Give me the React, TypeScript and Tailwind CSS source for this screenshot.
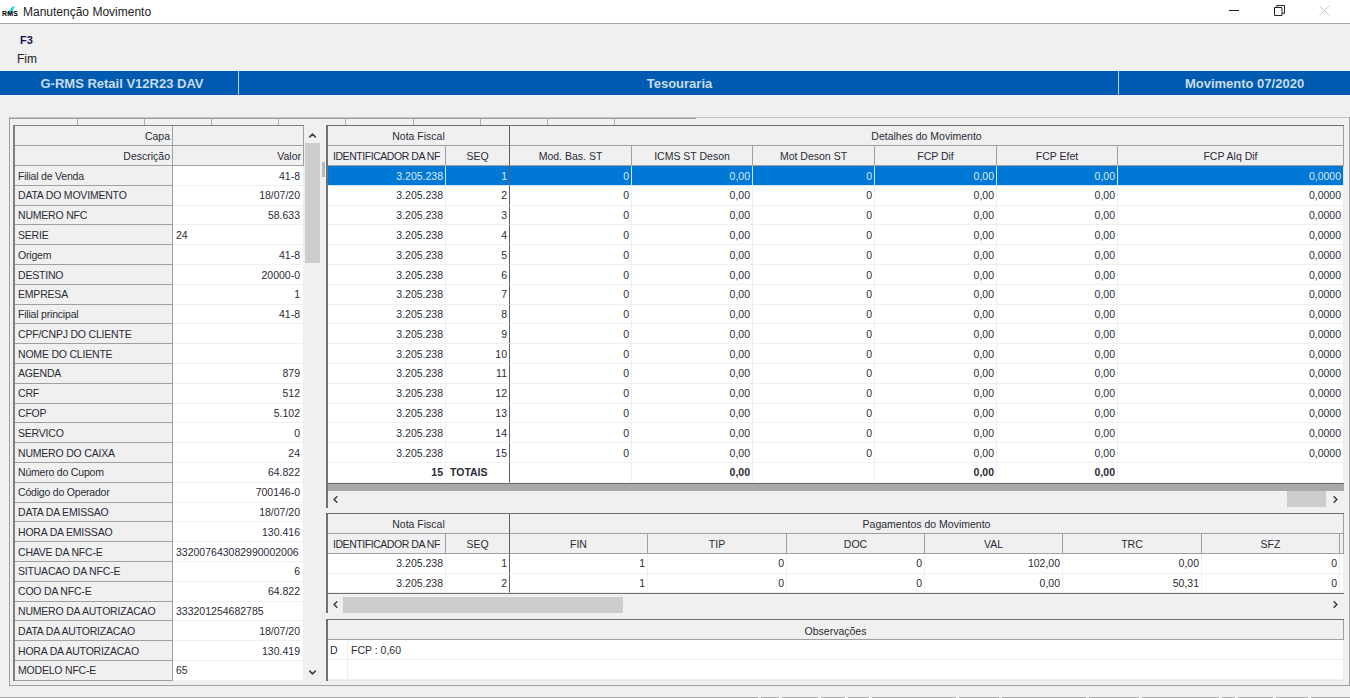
import { ChevronDown, ChevronLeft, ChevronRight, ChevronUp } from "lucide-react";
import type { ReactNode } from "react";

const capa: [string, string, boolean?][] = [
  ["Filial de Venda", "41-8"],
  ["DATA DO MOVIMENTO", "18/07/20"],
  ["NUMERO NFC", "58.633"],
  ["SERIE", "24", true],
  ["Origem", "41-8"],
  ["DESTINO", "20000-0"],
  ["EMPRESA", "1"],
  ["Filial principal", "41-8"],
  ["CPF/CNPJ DO CLIENTE", ""],
  ["NOME DO CLIENTE", ""],
  ["AGENDA", "879"],
  ["CRF", "512"],
  ["CFOP", "5.102"],
  ["SERVICO", "0"],
  ["NUMERO DO CAIXA", "24"],
  ["Número do Cupom", "64.822"],
  ["Código do Operador", "700146-0"],
  ["DATA DA EMISSAO", "18/07/20"],
  ["HORA DA EMISSAO", "130.416"],
  ["CHAVE DA NFC-E", "332007643082990002006", true],
  ["SITUACAO DA NFC-E", "6"],
  ["COO DA NFC-E", "64.822"],
  ["NUMERO DA AUTORIZACAO", "333201254682785", true],
  ["DATA DA AUTORIZACAO", "18/07/20"],
  ["HORA DA AUTORIZACAO", "130.419"],
  ["MODELO NFC-E", "65", true],
];

const detalhes = ["Mod. Bas. ST", "ICMS ST Deson", "Mot Deson ST", "FCP Dif", "FCP Efet", "FCP Alq Dif"];
const pagamentos = ["FIN", "TIP", "DOC", "VAL", "TRC", "SFZ"];
const pagRows = [
  ["1", "0", "0", "102,00", "0,00", "0"],
  ["1", "0", "0", "0,00", "50,31", "0"],
];
const tabTicks = [0, 1, 2, 3, 4, 5, 6, 7, 8];
const footerSegments = [
  "w-[758px]", "w-[18px]", "w-[36px]", "w-[24px]", "w-[21px]", "w-[84px]", "w-[40px]",
  "w-[84px]", "w-[50px]", "w-[77px]", "w-[13px]", "w-[35px]", "w-[32px]", "w-[39px]",
];

const detalhesCols = "grid-cols-[118px_64px_122px_121px_122px_122px_121px_226px]";
const pagCols = "grid-cols-[118px_64px_138px_139px_138px_138px_139px_138px_4px]";

function Head({
  children,
  className = "",
  pad = "pt-[2px]",
}: {
  children?: ReactNode;
  className?: string;
  pad?: string;
}) {
  return (
    <div className={`flex items-center justify-center overflow-hidden whitespace-nowrap border-b border-r border-[#a0a0a0] bg-[#f0f0f0] text-[#2b2b35] ${pad} ${className}`}>
      {children}
    </div>
  );
}

function Cell({ children, className = "", selected = false }: { children?: ReactNode; className?: string; selected?: boolean }) {
  return (
    <div
      className={`flex items-center justify-end overflow-hidden whitespace-nowrap border-b border-r pr-[2px] pt-[2px] ${
        selected ? "border-[#d4e6f7] bg-[#0078d7] text-[#dcebf8]" : "border-[#f0f0f0] bg-white text-[#2b2b35]"
      } ${className}`}
    >
      {children}
    </div>
  );
}

function HScroll({ thumb }: { thumb: "left" | "right" }) {
  return (
    <div className="flex h-[17px] items-center bg-[#f0f0f0]">
      <div className="flex w-[15px] justify-center text-[#404040]">
        <ChevronLeft size={11} strokeWidth={3.5} />
      </div>
      <div className="flex h-[16px] flex-1">
        {thumb === "left" ? (
          <div className="w-[280px] bg-[#cdcdcd]" />
        ) : (
          <div className="ml-auto mr-[1px] w-[39px] bg-[#cdcdcd]" />
        )}
      </div>
      <div className="flex w-[17px] justify-center text-[#404040]">
        <ChevronRight size={11} strokeWidth={3.5} />
      </div>
    </div>
  );
}

function CapaPanel() {
  return (
    <div className="flex">
      <div className="h-[556px] w-[291px] border-l-2 border-t border-[#808080]">
        <div className="grid grid-cols-[158px_131px] auto-rows-[20px]">
          <Head className="justify-end pr-[2px]">Capa</Head>
          <Head />
          <Head className="justify-end pr-[2px]">Descrição</Head>
          <Head className="justify-end pr-[2px]">Valor</Head>
        </div>
        <div className="grid grid-cols-[158px_131px] auto-rows-[19.8px]">
          {capa.map(([label, value, left], i) => (
            <div key={i} className="contents">
              <Head className="justify-start pl-[3px] tracking-[-0.2px]">{label}</Head>
              <Cell className={left ? "justify-start pl-[3px] pr-0" : "pr-[3px]"}>{value}</Cell>
            </div>
          ))}
        </div>
      </div>
      <div className="flex h-[556px] w-[16px] flex-col items-center bg-[#f0f0f0] text-[#404040]">
        <div className="flex h-[18px] items-center pt-[3px]">
          <ChevronUp size={11} strokeWidth={3.5} />
        </div>
        <div className="h-[120px] w-[15px] bg-[#cdcdcd]" />
        <div className="mt-auto flex h-[18px] items-center">
          <ChevronDown size={11} strokeWidth={3.5} />
        </div>
      </div>
      <div className="flex w-[6px] flex-col pl-[2px]">
        <div className="mt-[37px] h-[15px] w-[3px] bg-[#b9b9b9]" />
      </div>
    </div>
  );
}

function DetalhesGrid() {
  return (
    <div className="border-l-2 border-t border-[#707070]">
      <div className={`grid auto-rows-[20px] ${detalhesCols}`}>
        <Head className="col-span-2 border-r-[#606060]">Nota Fiscal</Head>
        <Head className="col-span-6">Detalhes do Movimento</Head>
        <Head className="tracking-[-0.45px]">IDENTIFICADOR DA NF</Head>
        <Head className="border-r-[#606060]">SEQ</Head>
        {detalhes.map((h) => (
          <Head key={h}>{h}</Head>
        ))}
      </div>
      <div className={`grid auto-rows-[19.8px] ${detalhesCols}`}>
        {Array.from({ length: 15 }, (_, i) => (
          <div key={i} className="contents">
            <Cell selected={i === 0}>3.205.238</Cell>
            <Cell selected={i === 0} className="border-r-[#606060]">{i + 1}</Cell>
            <Cell selected={i === 0}>0</Cell>
            <Cell selected={i === 0}>0,00</Cell>
            <Cell selected={i === 0}>0</Cell>
            <Cell selected={i === 0}>0,00</Cell>
            <Cell selected={i === 0}>0,00</Cell>
            <Cell selected={i === 0}>0,0000</Cell>
          </div>
        ))}
        <Cell className="font-bold">15</Cell>
        <Cell className="justify-start border-r-[#606060] pl-[4px] font-bold">TOTAIS</Cell>
        <Cell />
        <Cell className="font-bold">0,00</Cell>
        <Cell />
        <Cell className="font-bold">0,00</Cell>
        <Cell className="font-bold">0,00</Cell>
        <Cell />
      </div>
      <div className="h-[8px] border-t border-[#707070] bg-[#a9a9a9]" />
      <HScroll thumb="right" />
    </div>
  );
}

function PagamentosGrid() {
  return (
    <div className="mt-[5px] border-l-2 border-t border-[#707070]">
      <div className={`grid auto-rows-[20px] ${pagCols}`}>
        <Head className="col-span-2 border-r-[#606060]" pad="pt-[4px]">Nota Fiscal</Head>
        <Head className="col-span-7" pad="pt-[4px]">Pagamentos do Movimento</Head>
        <Head className="tracking-[-0.45px]" pad="pt-[4px]">IDENTIFICADOR DA NF</Head>
        <Head className="border-r-[#606060]" pad="pt-[4px]">SEQ</Head>
        {pagamentos.map((h) => (
          <Head key={h} pad="pt-[4px]">{h}</Head>
        ))}
        <Head />
      </div>
      <div className={`grid auto-rows-[19.8px] ${pagCols}`}>
        {pagRows.map((row, i) => (
          <div key={i} className="contents">
            <Cell>3.205.238</Cell>
            <Cell className="border-r-[#606060]">{i + 1}</Cell>
            {row.map((v, j) => (
              <Cell key={j}>{v}</Cell>
            ))}
            <Cell />
          </div>
        ))}
      </div>
      <div className="h-[3px] border-t border-[#707070]" />
      <HScroll thumb="left" />
    </div>
  );
}

function Observacoes() {
  return (
    <div className="mt-[6px] border-l-2 border-t border-[#707070]">
      <Head className="h-[20px]" pad="pt-[4px]">Observações</Head>
      <div className="grid auto-rows-[20px] grid-cols-[20px_996px] border-b border-[#e4e4e4]">
        <Cell className="justify-start pl-[2px] pr-0">D</Cell>
        <Cell className="justify-start pl-[3px] pr-0">FCP : 0,60</Cell>
        <Cell />
        <Cell />
      </div>
    </div>
  );
}

export default function App() {
  return (
    <div className="relative flex h-[698px] w-[1350px] flex-col overflow-hidden bg-[#f0f0f0] font-['Liberation_Sans',Arial,sans-serif] text-[10.5px] text-[#2b2b35]">
      <div className="flex h-[24px] items-center border-b border-[#a8a8a8] bg-white">
        <div className="relative ml-[2px] h-[14px] w-[18px]">
          <svg viewBox="0 0 18 14" className="absolute inset-0 h-[14px] w-[18px]">
            <path d="M5 9 L10 2 L13 1 L9 9 Z" fill="#19d3e0" />
          </svg>
          <span className="absolute left-0 top-[5px] text-[7px] font-bold leading-[7px] tracking-[0.2px] text-black">RMS</span>
        </div>
        <span className="ml-[3px] pt-[1px] text-[12px] text-[#222]">Manutenção Movimento</span>
        <div className="mb-[3px] ml-auto flex items-center">
          <svg width="10" height="10" viewBox="0 0 10 10" className="mr-[35px]">
            <path d="M0 5.5H10" stroke="#222" strokeWidth="1" />
          </svg>
          <svg width="11" height="11" viewBox="0 0 11 11" className="mr-[34px]">
            <path d="M.5 2.5h7.5v8H.5z M2.8 2.5V.5h7.7v7.8H8" fill="none" stroke="#222" strokeWidth="1" />
          </svg>
          <svg width="11" height="11" viewBox="0 0 11 11" className="mr-[20px]">
            <path d="M.5.5l10 10M10.5.5l-10 10" fill="none" stroke="#c8c8c8" strokeWidth="1" />
          </svg>
        </div>
      </div>

      <div className="flex h-[47px] flex-col pl-[17px]">
        <span className="ml-[3px] mt-[10px] text-[11px] font-bold leading-[13px] text-[#14145a]">F3</span>
        <span className="mt-[5px] text-[12px] leading-[15px] text-[#222]">Fim</span>
      </div>

      <div className="grid h-[24px] grid-cols-[239px_880px_1fr] bg-[#005bb0] pt-0 text-[13px] font-bold text-[#c9dcee]">
        <div className="flex items-center justify-center border-r border-[#b9d2ea] pl-[6px] pt-[2px]">G-RMS Retail V12R23 DAV</div>
        <div className="flex items-center justify-center border-r border-[#b9d2ea] pl-[2px] pt-[2px]">Tesouraria</div>
        <div className="flex items-center justify-center pl-[20px] pt-[2px]">Movimento 07/2020</div>
      </div>

      <div className="ml-[9px] mt-[22px] flex h-[569px] flex-col border-x border-b border-[#a0a0a0]">
        <div className="flex h-[8px] border-t border-[#c4c4c4]">
          <div className="flex h-[7px] border-t border-[#a0a0a0] pl-[1px]">
            {tabTicks.map((t) => (
              <div key={t} className="w-[67.1px] border-r border-[#b0b0b0]" />
            ))}
            <div className="w-[81px]" />
          </div>
        </div>
        <div className="flex pl-[3px]">
          <CapaPanel />
          <div className="w-[1018px]">
            <DetalhesGrid />
            <PagamentosGrid />
            <Observacoes />
          </div>
        </div>
      </div>

      <div className="mt-auto flex h-[1px] gap-[3px]">
        {footerSegments.map((w, i) => (
          <div key={i} className={`${w} bg-[#a8a8a8]`} />
        ))}
      </div>
    </div>
  );
}
